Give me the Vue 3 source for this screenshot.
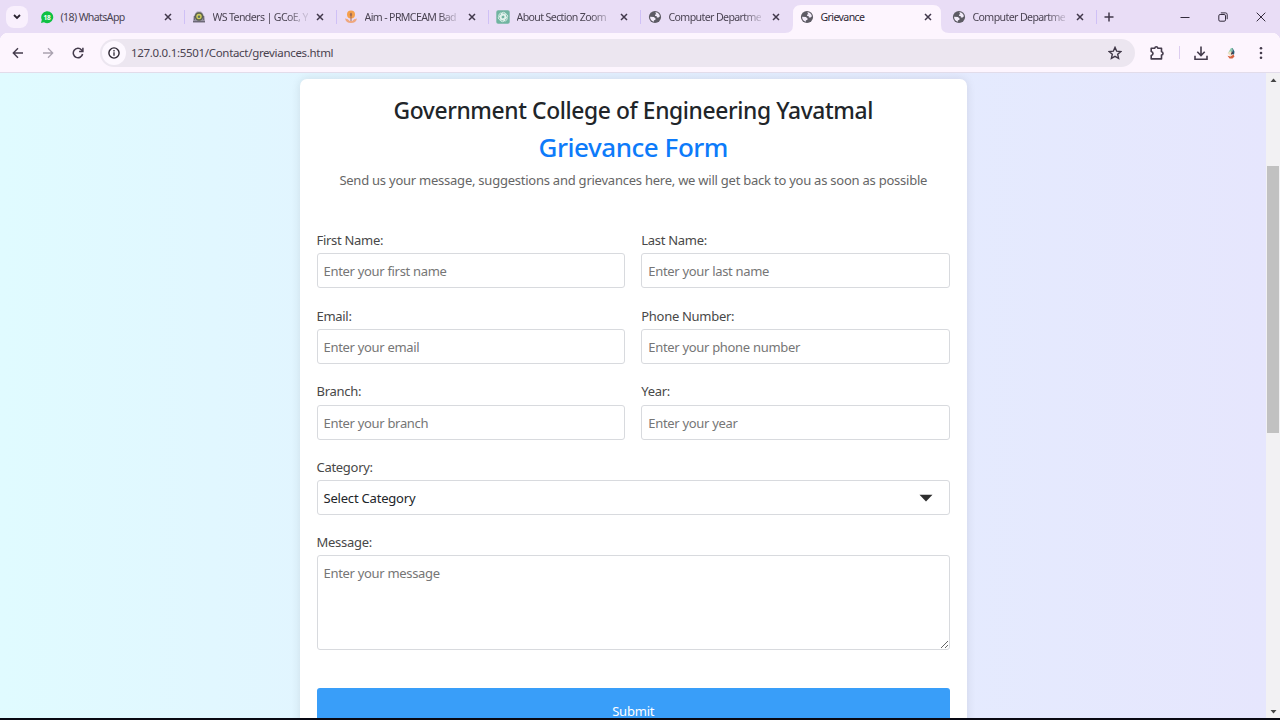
<script setup>
const tabs = [
  { title: '(18) WhatsApp', icon: 'whatsapp', whole: true },
  { title: 'WS Tenders | GCoE, Y', icon: 'crest' },
  { title: 'Aim - PRMCEAM Bad', icon: 'lamp' },
  { title: 'About Section Zoom', icon: 'gpt' },
  { title: 'Computer Departme', icon: 'globe' },
  { title: 'Grievance', icon: 'globe', active: true, whole: true },
  { title: 'Computer Departme', icon: 'globe' },
]
const fields = [
  { label: 'First Name:', hint: 'Enter your first name' },
  { label: 'Last Name:', hint: 'Enter your last name' },
  { label: 'Email:', hint: 'Enter your email' },
  { label: 'Phone Number:', hint: 'Enter your phone number' },
  { label: 'Branch:', hint: 'Enter your branch' },
  { label: 'Year:', hint: 'Enter your year' },
]
</script>

<template>
  <div class="screen">
    <header class="strip">
      <button class="search" aria-label="Search tabs">
        <svg width="8" height="6" viewBox="0 0 8 6"><path d="M1 1l3 3 3-3" fill="none" stroke="#2a2330" stroke-width="1.8" /></svg>
      </button>
      <div class="tabs">
        <div v-for="(t, i) in tabs" :key="i" class="tab" :class="{ active: t.active, sep: i < 4 || i === 6 }">
          <svg v-if="t.active" class="shape" width="164" height="28" viewBox="0 0 164 28"><path d="M0 28Q8 28 8 20V8Q8 0 16 0H148Q156 0 156 8V20Q156 28 164 28z" fill="#fdf5fe" /></svg>
          <svg v-if="t.icon === 'whatsapp'" class="fav" viewBox="0 0 14 14">
            <path d="M1 13l.8-3.200A6 6 0 1 1 4 12.300z" fill="#0fc143" />
            <text x="7.100" y="9.900" text-anchor="middle" class="count">18</text>
          </svg>
          <svg v-else-if="t.icon === 'crest'" class="fav" viewBox="0 0 14 14">
            <path d="M1 12.500L2 6l1.500-3L5 1.500h4L10.500 3 12 6l1 6.500z" fill="#a5a0ae" />
            <path d="M1 11.500h12M2.500 6v4M11.500 6v4" stroke="#6d6878" stroke-width="1.500" />
            <circle cx="7" cy="6.500" r="4.200" fill="#5c614e" />
            <circle cx="7" cy="6.500" r="2.700" fill="#d3ce5d" />
            <circle cx="7" cy="6.700" r="1.300" fill="#5b7060" />
          </svg>
          <svg v-else-if="t.icon === 'lamp'" class="fav" viewBox="0 0 14 14">
            <path d="M1 8.500Q2 13 7 13t6-4.500Q9.500 8.500 8.300 11H5.700Q4 8.300 1 8.500z" fill="#efa77e" />
            <circle cx="7" cy="4.500" r="4" fill="#f5a04d" />
            <path d="M7 2.500c1.500 1.400 1.500 2.800.5 3.600V11h-1V6.100c-1-.8-1-2.200.5-3.600z" fill="#a26b52" />
          </svg>
          <svg v-else-if="t.icon === 'gpt'" class="fav" viewBox="0 0 14 14">
            <rect x=".3" y=".3" width="13.400" height="13.400" rx="1.800" fill="#70b4a0" />
            <g fill="none" stroke="#e6f5ef" stroke-width=".8">
              <rect v-for="a in 3" :key="a" x="5.200" y="2.300" width="4.400" height="7.400" rx="2.200" :transform="`rotate(${a * 120} 7 7)`" />
              <rect v-for="a in 3" :key="'b' + a" x="4.400" y="4.300" width="4.400" height="7.400" rx="2.200" :transform="`rotate(${a * 120} 7 7)`" />
            </g>
          </svg>
          <svg v-else class="fav" viewBox="0 0 14 14">
            <circle cx="7" cy="7" r="6.100" fill="#5d5b64" />
            <path d="M7.300 2.200C9.500 2 11.700 4 11.900 6.300L10.600 7.500H8.800V6.200L7 5.800V4.400h1.300zM2.100 6.800l3.800.3 1.700 1.500-.3 1.300-1.400.3v1.600C3.500 11.300 2 9.300 2.100 6.800z" fill="#f3ecfa" />
          </svg>
          <span class="title" :class="{ whole: t.whole }">{{ t.title }}</span>
          <svg class="close" width="8" height="8" viewBox="0 0 8 8"><path d="M1 1l6 6M7 1L1 7" stroke="#41384b" stroke-width="1.500" /></svg>
        </div>
      </div>
      <svg class="plus" width="10" height="10" viewBox="0 0 10 10"><path d="M5 .5v9M.5 5h9" stroke="#41384b" stroke-width="1.500" /></svg>
      <div class="window">
        <svg width="10" height="10" viewBox="0 0 10 10"><path d="M.5 5.500h9" stroke="#332b3c" /></svg>
        <svg width="10" height="10" viewBox="0 0 10 10" fill="none" stroke="#332b3c"><rect x=".8" y="2.500" width="6.700" height="6.700" rx="1.300" /><path d="M2.800.9h4.700q1.700 0 1.700 1.700v4.600" /></svg>
        <svg width="10" height="10" viewBox="0 0 10 10"><path d="M.7.7l8.600 8.600M9.300.7L.7 9.300" stroke="#332b3c" /></svg>
      </div>
    </header>

    <nav class="toolbar">
      <div class="nav">
        <svg width="12" height="12" viewBox="0 0 12 12" fill="none" stroke="#443b4c" stroke-width="1.400"><path d="M11 6H1.500M6 1.300L1.300 6 6 10.700" /></svg>
        <svg width="12" height="12" viewBox="0 0 12 12" fill="none" stroke="#aaa2b0" stroke-width="1.300"><path d="M1 6h9.500M6 1.300L10.700 6 6 10.700" /></svg>
        <svg width="12" height="12" viewBox="0 0 12 12" fill="none" stroke="#443b4c" stroke-width="1.500"><path d="M10.600 7A4.700 4.700 0 1 1 9.500 2.900L10.600 4" /><path d="M10.900.8V4.600H7.100" /></svg>
      </div>
      <div class="omni">
        <span class="info"><svg width="12" height="12" viewBox="0 0 12 12"><circle cx="6" cy="6" r="5.100" fill="none" stroke="#2c2632" stroke-width="1.400" /><path d="M6 5.300v3.500M6 3v1.400" stroke="#2c2632" stroke-width="1.300" /></svg></span>
        <span class="url">127.0.0.1:5501/Contact/greviances.html</span>
        <svg class="star" width="14" height="14" viewBox="0 0 14 14"><path d="M7 1.400l1.700 3.800 4.100.4-3.100 2.700.9 4.100L7 10.300l-3.600 2.100.9-4.100-3.100-2.700 4.100-.4z" fill="none" stroke="#3f3747" stroke-width="1.400" /></svg>
      </div>
      <svg class="puzzle" width="16" height="16" viewBox="0 0 16 16"><path d="M2.200 3.200h3.600Q6 1.800 7.300 1.800T8.800 3.200h3.700v3.600q1.500.2 1.500 1.600t-1.500 1.600v3.900H2.200v-3.400q1.800-.5 1.800-2t-1.800-2z" fill="none" stroke="#443b4c" stroke-width="1.600" stroke-linejoin="round" /></svg>
      <i class="rule"></i>
      <svg class="down" width="14" height="14" viewBox="0 0 14 14" fill="none" stroke="#443b4c" stroke-width="1.600"><path d="M7 .5v8.800M3.300 5.800L7 9.500l3.700-3.700M1 9.800v3.400h12V9.800" /></svg>
      <svg class="avatar" width="12" height="14" viewBox="0 0 12 14">
        <path d="M6 2l2 0-1 4-4 1z" fill="#8fcdb0" /><path d="M7.500 1.800l2 4-.5 3-2-1 .5-3z" fill="#255b75" /><path d="M2.500 7l3-2 1.500 3-1 3z" fill="#eee3c6" /><path d="M2.500 9.800l3 .7 3-2 1 2-2 2H4.500z" fill="#d8623f" /><path d="M7 5l1 2-1 2-1-1z" fill="#442f38" />
      </svg>
      <svg class="dots" width="4" height="14" viewBox="0 0 4 14" fill="#443b4c"><circle cx="2" cy="2.300" r="1.300" /><circle cx="2" cy="7" r="1.300" /><circle cx="2" cy="11.700" r="1.300" /></svg>
    </nav>

    <div class="viewport">
      <main class="page">
        <form class="card" @submit.prevent>
          <h1>Government College of Engineering Yavatmal</h1>
          <h2>Grievance Form</h2>
          <p class="lead">Send us your message, suggestions and grievances here, we will get back to you as soon as possible</p>
          <div class="grid">
            <label v-for="f in fields" :key="f.label" class="field">
              <span class="label">{{ f.label }}</span>
              <input type="text" :placeholder="f.hint" />
            </label>
            <div class="field wide">
              <span class="label">Category:</span>
              <div class="select">Select Category
                <svg width="14" height="8" viewBox="0 0 14 8"><path d="M.5.8h13L7 7.500z" fill="#2e2e2e" /></svg>
              </div>
            </div>
            <label class="field wide message">
              <span class="label">Message:</span>
              <textarea placeholder="Enter your message"></textarea>
            </label>
          </div>
          <button class="submit">Submit</button>
        </form>
      </main>
      <aside class="scroll">
        <svg width="7" height="4" viewBox="0 0 7 4"><path d="M.5 4h6L3.500.5z" fill="#454545" /></svg>
        <div class="track"><div class="thumb"></div></div>
        <svg width="7" height="4" viewBox="0 0 7 4"><path d="M.5 0h6l-3 3.500z" fill="#454545" /></svg>
      </aside>
    </div>
  </div>
</template>

<style>
html, body { margin: 0; overflow: hidden; background: #080812; }
</style>
<style scoped>
* { box-sizing: border-box; }
svg { display: block; flex: none; }
.screen { width: 1280px; height: 720px; display: flex; flex-direction: column; padding-bottom: 2px; background: #080812; font-family: "Noto Sans", sans-serif; overflow: hidden; }
.strip { height: 33px; flex: none; display: flex; align-items: center; background: #e9ddf6; }
.search { width: 22px; height: 22px; margin: 0 4px 0 6px; padding: 0; border: 0; border-radius: 8px; background: #f9f0fd; display: grid; place-items: center; }
.tabs { display: flex; height: 33px; }
.tab { width: 152px; height: 33px; display: flex; align-items: center; padding: 1px 12.300px 0 8px; position: relative; }
.tab.sep::after { content: ""; position: absolute; right: -1px; top: 10px; width: 1px; height: 14px; background: #cfc0f6; }
.fav { width: 14px; height: 14px; margin-right: 6.500px; }
.count { font: 700 6.500px "Noto Sans", sans-serif; fill: #fff; }
.title { font-size: 10.600px; letter-spacing: -0.620px; line-height: 16px; color: #4b4453; white-space: nowrap; mask-image: linear-gradient(to right, #000 74px, rgba(0, 0, 0, .2) 92px); }
.title.whole { mask-image: none; }
.close { margin-left: auto; }
.tab.active { z-index: 1; }
.shape { position: absolute; left: -7px; top: 5px; z-index: -1; }
.tab.active .title { color: #2e2734; }
.plus { margin-left: 8px; }
.window { margin-left: auto; margin-right: 14px; display: flex; gap: 28px; }
.toolbar { height: 40px; flex: none; display: flex; align-items: center; background: radial-gradient(circle at 8px 8px, #fdf5fe 8px, #e9ddf6 8.500px) 0 0 / 8px 8px no-repeat, radial-gradient(circle at 0 8px, #fdf5fe 8px, #e9ddf6 8.500px) 100% 0 / 8px 8px no-repeat, #fdf5fe; border-bottom: 1px solid #e2dcea; }
.nav { display: flex; gap: 18px; padding-left: 12.300px; width: 100px; }
.omni { width: 1035px; height: 28px; border-radius: 14px; background: #ece6f0; display: flex; align-items: center; padding: 0 13px 0 2px; }
.info { width: 24px; height: 24px; border-radius: 50%; background: #fdf8ff; display: grid; place-items: center; margin-right: 5px; }
.url { font-size: 11.500px; letter-spacing: -0.310px; color: #49424f; }
.star { margin-left: auto; }
.puzzle { margin-left: 14px; }
.rule { width: 1px; height: 13px; background: #ddcdf0; margin: 0 14px 0 14px; }
.avatar { margin: 0 22px 0 17px; }
.viewport { flex: 1; min-height: 0; display: flex; overflow: hidden; }
.page { flex: 1; min-height: 0; overflow: hidden; background: linear-gradient(to right, #e0fbff, #e3efff 50%, #e6e6fd); display: flex; justify-content: center; padding-top: 6px; }
.card { width: 667px; height: 760px; flex: none; border-radius: 7px; background: #fff; box-shadow: 0 0 10px rgba(0, 0, 0, .1); padding: 13px 16.500px 0 17px; display: flex; flex-direction: column; }
h1, h2 { margin: 0; text-align: center; font-weight: 500; white-space: nowrap; }
h1 { font-size: 22.800px; line-height: 38px; letter-spacing: -0.380px; color: #212529; }
h2 { font-size: 26px; line-height: 35px; letter-spacing: -0.450px; color: #0d7bfa; }
.lead { margin: 5px 0 0; text-align: center; font-size: 13px; line-height: 20px; letter-spacing: -0.238px; color: #666; white-space: nowrap; }
.grid { margin-top: 40px; display: grid; grid-template-columns: 1fr 1fr; column-gap: 16px; }
.field { height: 75.600px; display: flex; flex-direction: column; }
.field.wide { grid-column: 1 / 3; }
.field.message { height: auto; }
.label { height: 23.400px; flex: none; font-size: 13px; line-height: 20px; letter-spacing: -0.290px; color: #484848; }
input, .select, textarea { width: 100%; height: 35px; margin: 0; padding: 1px 6px 0; border: 1px solid #d8dade; border-radius: 3px; background: #fff; font: 13px "Noto Sans", sans-serif; letter-spacing: -0.310px; flex: none; outline: 0; }
input::placeholder, textarea::placeholder { color: #767676; opacity: 1; }
.select { display: flex; align-items: center; justify-content: space-between; padding-right: 16px; letter-spacing: -0.200px; color: #212529; }
textarea { height: 95px; margin-top: -0.600px; padding-top: 7px; line-height: 20px; resize: vertical; }
.submit { margin: 38px 0 0; height: 46px; flex: none; border: 0; border-radius: 3px; background: #399ef9; color: #fff; font: 13px/14px "Noto Sans", sans-serif; letter-spacing: -0.200px; }
.scroll { width: 14px; background: #f2f1f3; display: flex; flex-direction: column; align-items: center; padding: 5px 0 4px; }
.track { flex: 1; width: 12px; padding-top: 84px; }
.thumb { height: 267px; background: #c1c1c1; }
</style>
